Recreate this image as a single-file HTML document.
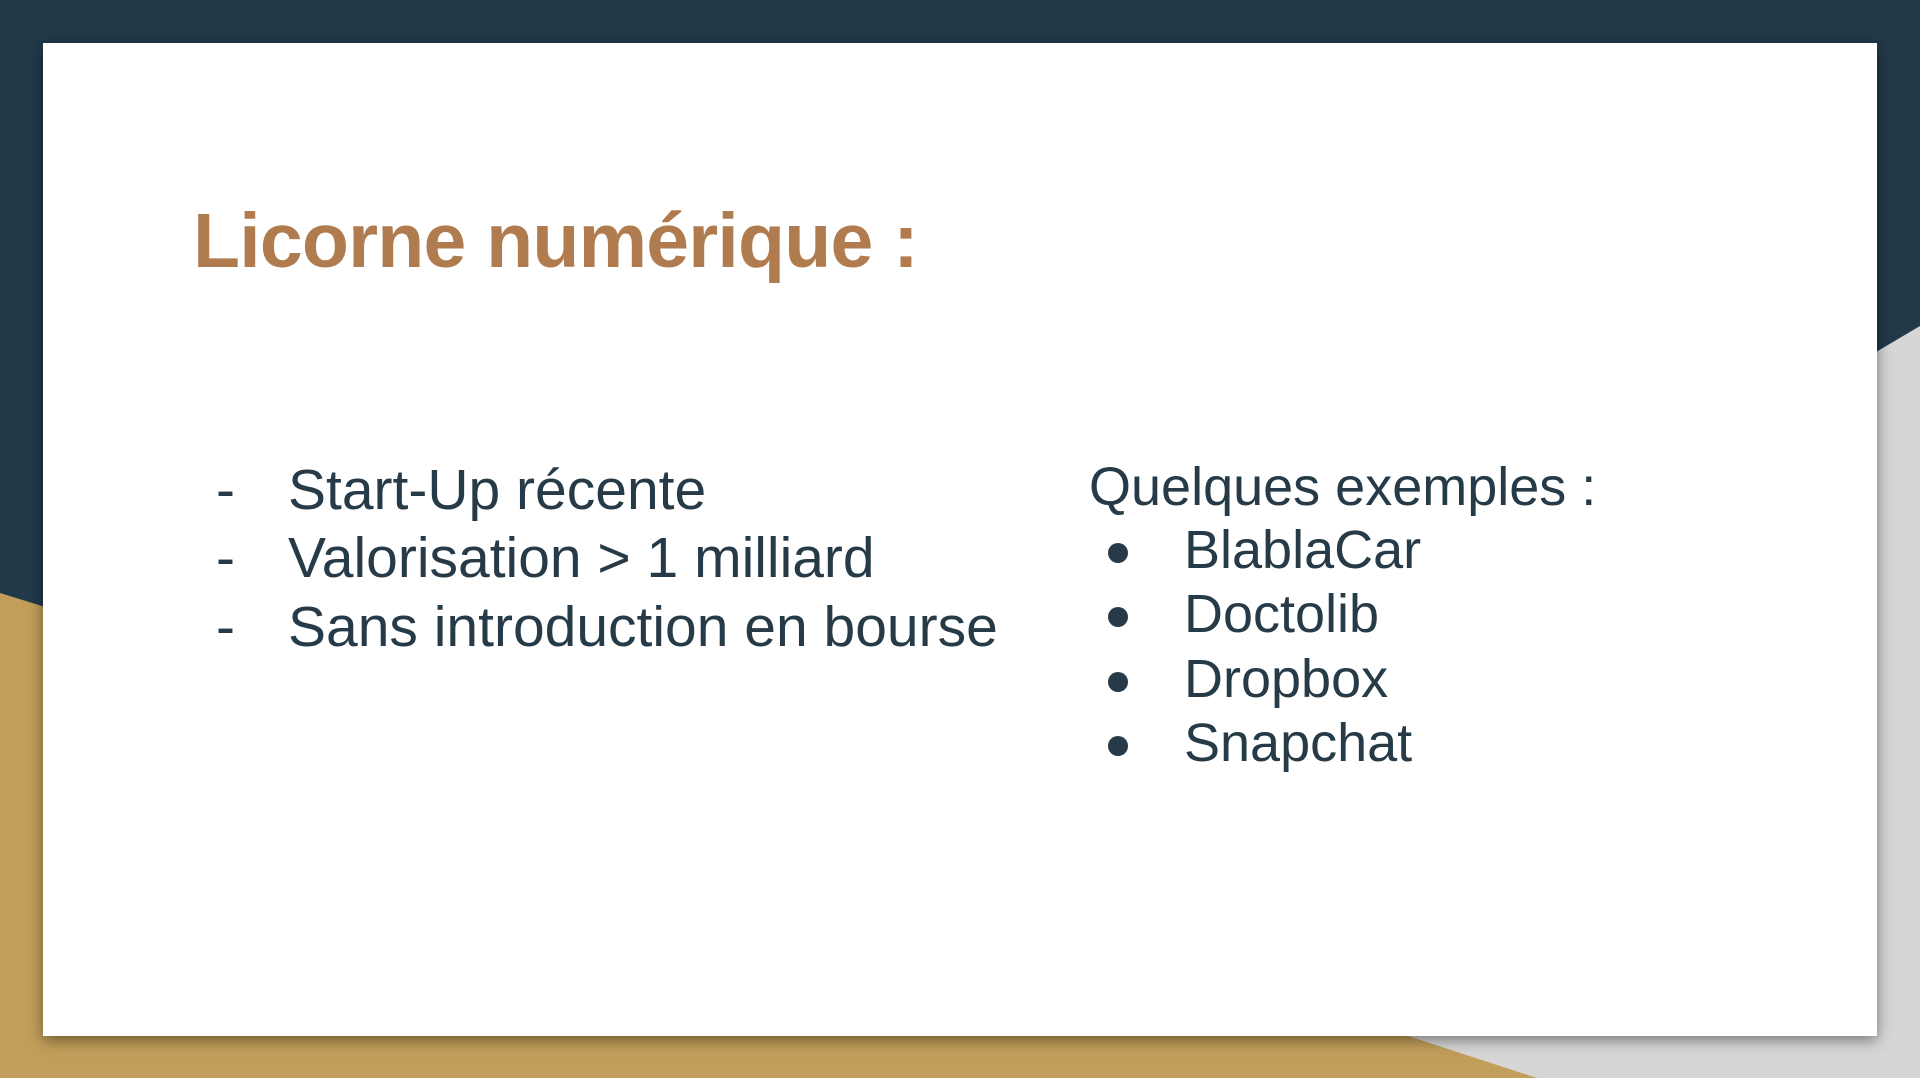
<!DOCTYPE html>
<html><head><meta charset="utf-8"><style>
html,body{margin:0;padding:0}
body{width:1920px;height:1078px;position:relative;overflow:hidden;background:#22394a;font-family:"Liberation Sans",sans-serif}
svg.bg{position:absolute;left:0;top:0}
.card{position:absolute;left:43px;top:43px;width:1834px;height:993px;background:#fff;box-shadow:0 4px 14px rgba(0,0,0,0.45)}
.t{position:absolute;line-height:1;white-space:nowrap;color:#263a47}
.title{font-weight:bold;color:#b07c4f;font-size:77px;letter-spacing:-0.8px}
.b{font-size:54px}
.l{font-size:57px}
.dot{position:absolute;width:20px;height:20px;border-radius:50%;background:#263a47}
</style></head><body>
<svg class="bg" width="1920" height="1078">
<polygon points="1920,326 900,930 1537,1078 1920,1078" fill="#d6d6d6"/>
<polygon points="0,593 1000,903 1537,1078 0,1078" fill="#c19f5a"/>
</svg>
<div class="card"></div>
<div class="t title" style="left:193px;top:203px">Licorne numérique :</div>
<div class="t l" style="left:216px;top:462px">-</div>
<div class="t l" style="left:288px;top:462px">Start-Up récente</div>
<div class="t l" style="left:216px;top:530px">-</div>
<div class="t l" style="left:288px;top:530px">Valorisation &gt; 1 milliard</div>
<div class="t l" style="left:216px;top:599px">-</div>
<div class="t l" style="left:288px;top:599px">Sans introduction en bourse</div>
<div class="t b" style="left:1089px;top:460px">Quelques exemples :</div>
<div class="dot" style="left:1108px;top:543px"></div>
<div class="t b" style="left:1184px;top:523px">BlablaCar</div>
<div class="dot" style="left:1108px;top:607px"></div>
<div class="t b" style="left:1184px;top:587px">Doctolib</div>
<div class="dot" style="left:1108px;top:672px"></div>
<div class="t b" style="left:1184px;top:652px">Dropbox</div>
<div class="dot" style="left:1108px;top:736px"></div>
<div class="t b" style="left:1184px;top:716px">Snapchat</div>
</body></html>
